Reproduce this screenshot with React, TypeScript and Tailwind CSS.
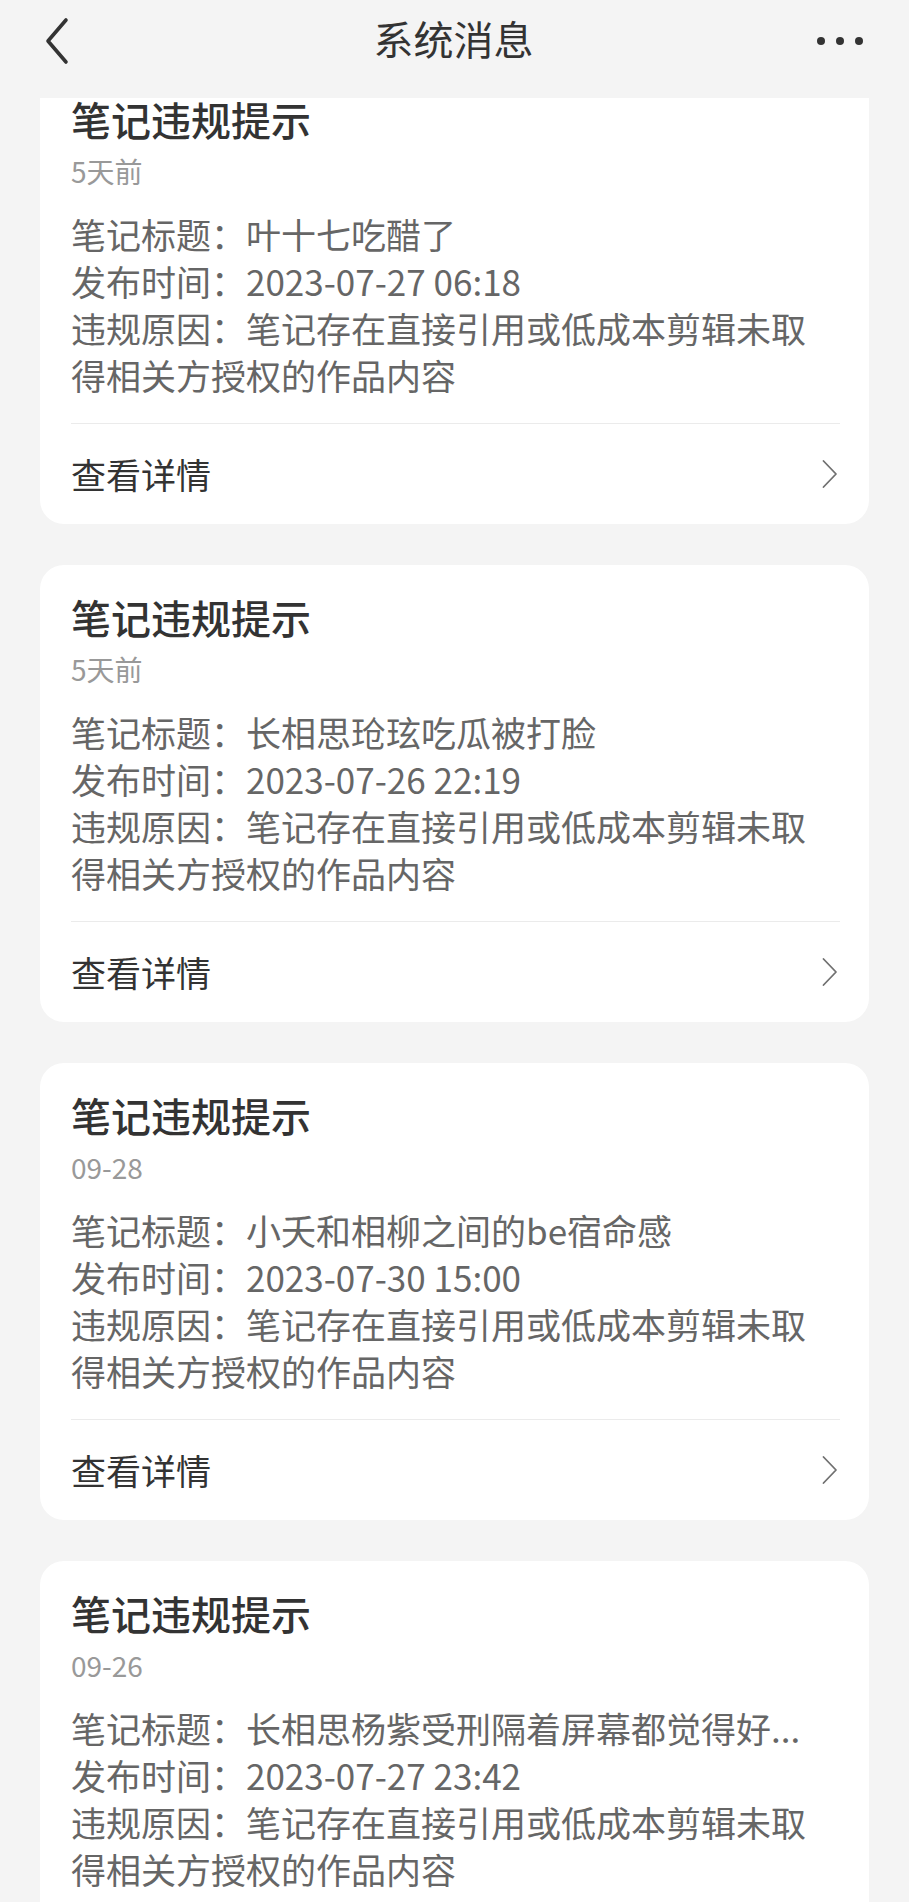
type Notice = {
  date: string;
  title: string;
  publishedAt: string;
};

const notices: Notice[] = [
  { date: "5天前", title: "叶十七吃醋了", publishedAt: "2023-07-27 06:18" },
  { date: "5天前", title: "长相思玱玹吃瓜被打脸", publishedAt: "2023-07-26 22:19" },
  { date: "09-28", title: "小夭和相柳之间的be宿命感", publishedAt: "2023-07-30 15:00" },
  { date: "09-26", title: "长相思杨紫受刑隔着屏幕都觉得好...", publishedAt: "2023-07-27 23:42" },
];

const REASON = "笔记存在直接引用或低成本剪辑未取得相关方授权的作品内容";

function NoticeCard({ item }: { item: Notice }) {
  return (
    <div className="bg-white rounded-[24px] pl-[31px] pr-[29px] pt-[28px] shrink-0">
      <h3 className="text-[40px] leading-[48px] font-medium text-[#333]">笔记违规提示</h3>
      <p className="mt-[10px] text-[28px] leading-[36px] text-[#999]">{item.date}</p>
      <div className="mt-[21px] text-[35px] leading-[47px] text-[#666]">
        <p className="truncate">笔记标题：{item.title}</p>
        <p>发布时间：{item.publishedAt}</p>
        <p>违规原因：{REASON}</p>
      </div>
      <div className="mt-[25px] h-px bg-[#ebebeb]" />
      <div className="h-[100px] flex items-center justify-between">
        <span className="text-[35px] text-[#333]">查看详情</span>
        <svg width="18" height="30" viewBox="0 0 18 30" fill="none" className="mr-[1px]">
          <path d="M2.5 2 L15 15 L2.5 28" stroke="#707070" strokeWidth="1.8" strokeLinecap="round" strokeLinejoin="round" />
        </svg>
      </div>
    </div>
  );
}

export default function App() {
  return (
    <div
      className="w-[909px] h-[1902px] overflow-hidden bg-[#f4f4f4] flex flex-col"
      style={{ fontFamily: '"Noto Sans CJK SC", "Noto Sans", sans-serif' }}
    >
      {/* App bar */}
      <header className="h-[98px] shrink-0 relative z-10 bg-[#f4f4f4]">
        <div className="h-[82px] grid grid-cols-[1fr_auto_1fr] items-center pl-[44px] pr-[46px]">
          <svg width="26" height="48" viewBox="0 0 26 48" fill="none">
            <path d="M22 3 L4 24 L22 45" stroke="#333" strokeWidth="3.6" strokeLinecap="round" strokeLinejoin="round" />
          </svg>
          <h1 className="text-[40px] leading-[48px] text-[#333] -mt-[6px]">系统消息</h1>
          <div className="flex items-center justify-end gap-[11px]">
            <span className="w-[8px] h-[8px] rounded-full bg-[#333]" />
            <span className="w-[8px] h-[8px] rounded-full bg-[#333]" />
            <span className="w-[8px] h-[8px] rounded-full bg-[#333]" />
          </div>
        </div>
      </header>

      {/* Message list, scrolled a little */}
      <div className="flex-1 overflow-hidden">
        <div className="-mt-[31px] px-[40px] flex flex-col gap-[41px]">
          {notices.map((n, i) => (
            <NoticeCard key={i} item={n} />
          ))}
        </div>
      </div>
    </div>
  );
}
